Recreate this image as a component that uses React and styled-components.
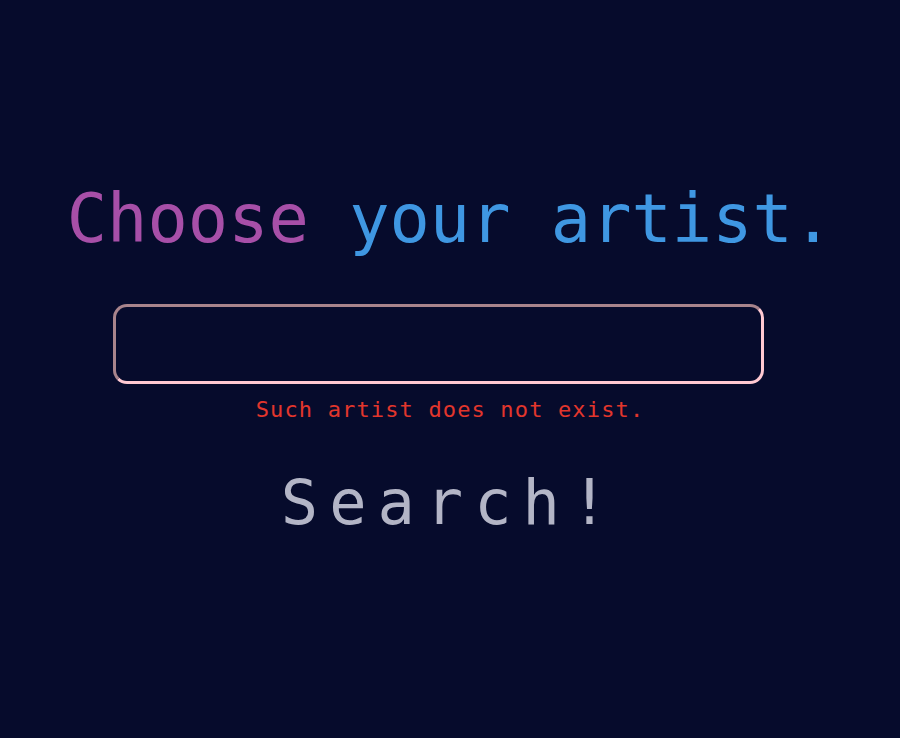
import React, { useState } from "react";
import styled, { createGlobalStyle } from "styled-components";

const GlobalStyle = createGlobalStyle`
  html, body {
    margin: 0;
    padding: 0;
    background: #060b2c;
  }
`;

const Page = styled.main`
  min-height: 100vh;
  display: flex;
  flex-direction: column;
  align-items: center;
  padding-top: 186px;
  box-sizing: border-box;
  font-family: "DejaVu Sans Mono", "Liberation Mono", monospace;
`;

const Title = styled.h1`
  margin: 0;
  font-size: 67px;
  font-weight: 400;
  line-height: 1;
  white-space: pre;
`;

const Word = styled.span`
  color: ${(p) => p.color};
`;

const Form = styled.form`
  display: flex;
  flex-direction: column;
  align-items: center;
  margin-top: 51px;
`;

const Input = styled.input`
  box-sizing: border-box;
  width: 651px;
  height: 80px;
  margin-right: 24px;
  background: transparent;
  border: 3px solid;
  border-color: #a8848c #ffc9d2 #ffc9d2 #a8848c;
  border-radius: 14px;
  outline: none;
  color: #e6e6f0;
  font-family: inherit;
  font-size: 28px;
  padding: 0 18px;
`;

const Error = styled.p`
  margin: 15px 0 0;
  color: #e2362c;
  font-size: 22px;
  line-height: 1;
  letter-spacing: 1.15px;
`;

const SearchButton = styled.button`
  margin-top: 51px;
  background: none;
  border: none;
  padding: 0;
  color: #b3b5c6;
  font-family: inherit;
  font-size: 62px;
  line-height: 1;
  letter-spacing: 11px;
  cursor: pointer;
`;

export default function App() {
  const [artist, setArtist] = useState("");

  return (
    <>
      <GlobalStyle />
      <Page>
        <Title>
          <Word color="#a74fa8">Choose</Word> <Word color="#3f97e2">your artist.</Word>
        </Title>
        <Form onSubmit={(e) => e.preventDefault()}>
          <Input value={artist} onChange={(e) => setArtist(e.target.value)} />
          <Error>Such artist does not exist.</Error>
          <SearchButton type="submit">Search!</SearchButton>
        </Form>
      </Page>
    </>
  );
}
